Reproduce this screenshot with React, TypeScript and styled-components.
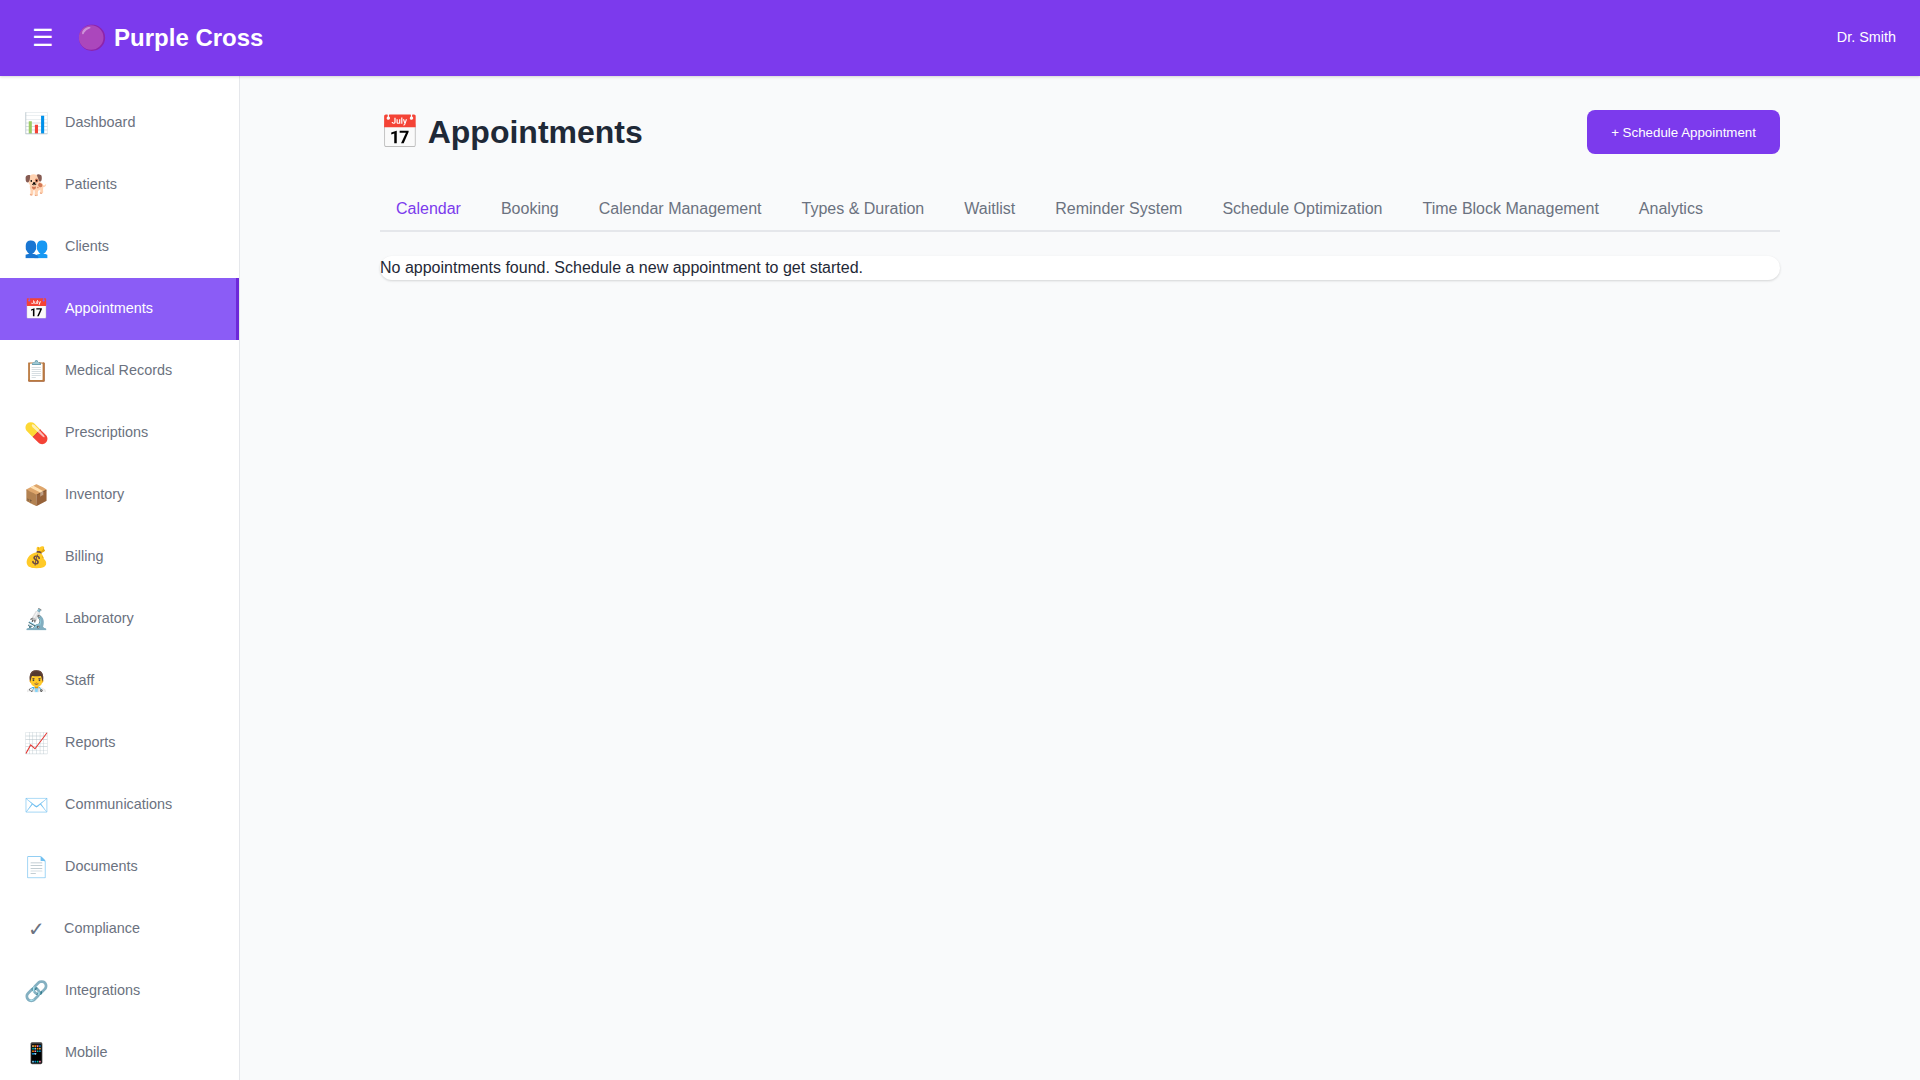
import React from "react";
import styled, { createGlobalStyle } from "styled-components";

const Global = createGlobalStyle`
  * { box-sizing: border-box; margin: 0; padding: 0; }
  body {
    font-family: "Liberation Sans", Arial, sans-serif;
    background: #f9fafb;
    color: #1f2937;
    line-height: 1.5;
    overflow: hidden;
  }
`;

const Layout = styled.div`
  display: flex;
  flex-direction: column;
  height: 100vh;
  overflow: hidden;
`;

const Header = styled.header`
  position: relative;
  z-index: 1;
  display: flex;
  align-items: center;
  justify-content: space-between;
  height: 76px;
  flex: none;
  padding: 0 24px;
  background: #7c3aed;
  color: #fff;
  box-shadow: 0 1px 3px rgba(0, 0, 0, 0.1), 0 1px 2px rgba(0, 0, 0, 0.06);
`;

const HeaderLeft = styled.div`
  display: flex;
  align-items: center;
  gap: 16px;
`;

const MenuButton = styled.button`
  width: 37.4px;
  padding: 8px;
  border: none;
  background: none;
  color: #fff;
  font-family: inherit;
  font-size: 24px;
  line-height: normal;
`;

const Brand = styled.h1`
  font-size: 24px;
  font-weight: 700;
`;

const User = styled.span`
  font-size: 14.4px;
`;

const Body = styled.div`
  display: flex;
  flex: 1;
  min-height: 0;
`;

const Sidebar = styled.nav`
  width: 240px;
  flex: none;
  padding-top: 16px;
  background: #fff;
  border-right: 1px solid #e5e7eb;
  overflow: hidden;
`;

const NavItem = styled.a<{ $active?: boolean }>`
  display: flex;
  align-items: center;
  gap: 16px;
  height: 62px;
  padding: 0 24px;
  font-size: 14.4px;
  color: ${(p) => (p.$active ? "#fff" : "#6b7280")};
  background: ${(p) => (p.$active ? "#8b5cf6" : "transparent")};
  border-right: ${(p) => (p.$active ? "3px solid #6d28d9" : "none")};
`;

const NavIcon = styled.span`
  min-width: 24px;
  font-size: 20px;
  text-align: center;
`;

const Main = styled.main`
  flex: 1;
  padding: 32px;
`;

const Page = styled.div`
  max-width: 1400px;
  margin: 0 auto;
`;

const PageHeader = styled.div`
  display: flex;
  align-items: center;
  justify-content: space-between;
  margin-bottom: 32px;
`;

const Title = styled.h1`
  font-size: 32px;
  font-weight: 700;
`;

const PrimaryButton = styled.button`
  min-height: 44px;
  padding: 12px 24px;
  border: none;
  border-radius: 8px;
  background: #7c3aed;
  color: #fff;
  font-family: inherit;
  font-size: 13.3333px;
`;

const Tabs = styled.div`
  display: flex;
  gap: 8px;
  margin-bottom: 24px;
  border-bottom: 2px solid #e5e7eb;
`;

const Tab = styled.button<{ $active?: boolean }>`
  padding: 12px 16px;
  border: none;
  background: none;
  color: ${(p) => (p.$active ? "#7c3aed" : "#6b7280")};
  font-family: inherit;
  font-size: 16px;
`;

const Card = styled.div`
  border-radius: 12px;
  background: #fff;
  box-shadow: 0 1px 3px rgba(0, 0, 0, 0.1), 0 1px 2px rgba(0, 0, 0, 0.06);
`;

const nav: [string, string][] = [
  ["📊", "Dashboard"],
  ["🐕", "Patients"],
  ["👥", "Clients"],
  ["📅", "Appointments"],
  ["📋", "Medical Records"],
  ["💊", "Prescriptions"],
  ["📦", "Inventory"],
  ["💰", "Billing"],
  ["🔬", "Laboratory"],
  ["👨‍⚕️", "Staff"],
  ["📈", "Reports"],
  ["✉️", "Communications"],
  ["📄", "Documents"],
  ["✓", "Compliance"],
  ["🔗", "Integrations"],
  ["📱", "Mobile"],
];

const tabs = [
  "Calendar",
  "Booking",
  "Calendar Management",
  "Types & Duration",
  "Waitlist",
  "Reminder System",
  "Schedule Optimization",
  "Time Block Management",
  "Analytics",
];

export default function App() {
  return (
    <Layout>
      <Global />
      <Header>
        <HeaderLeft>
          <MenuButton aria-label="Toggle menu">☰</MenuButton>
          <Brand>🟣 Purple Cross</Brand>
        </HeaderLeft>
        <User>Dr. Smith</User>
      </Header>
      <Body>
        <Sidebar>
          {nav.map(([icon, label]) => (
            <NavItem key={label} $active={label === "Appointments"}>
              <NavIcon>{icon}</NavIcon>
              <span>{label}</span>
            </NavItem>
          ))}
        </Sidebar>
        <Main>
          <Page>
            <PageHeader>
              <Title>📅 Appointments</Title>
              <PrimaryButton>+ Schedule Appointment</PrimaryButton>
            </PageHeader>
            <Tabs>
              {tabs.map((tab, i) => (
                <Tab key={tab} $active={i === 0}>
                  {tab}
                </Tab>
              ))}
            </Tabs>
            <Card>No appointments found. Schedule a new appointment to get started.</Card>
          </Page>
        </Main>
      </Body>
    </Layout>
  );
}
